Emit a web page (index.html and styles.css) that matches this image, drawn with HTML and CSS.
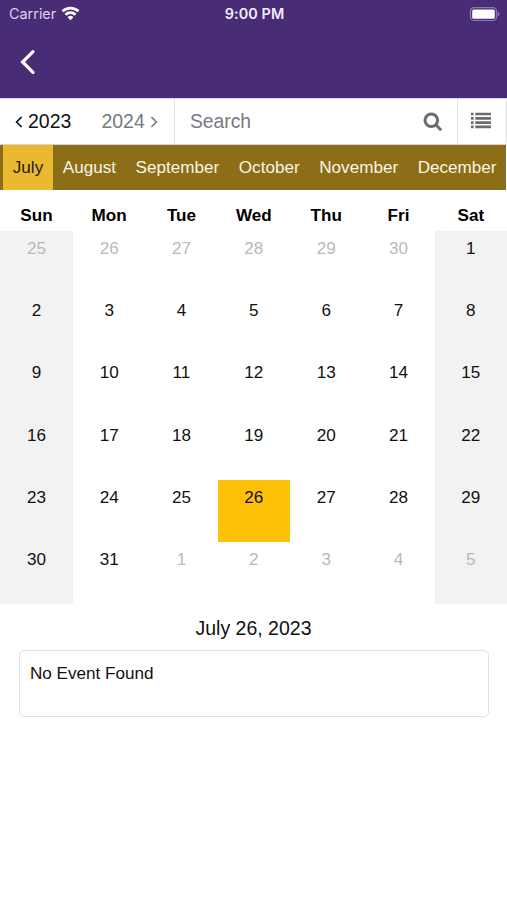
FILE: index.html
```html
<!DOCTYPE html>
<html lang="en">
<head>
    <meta charset="UTF-8">
    <meta name="viewport" content="width=device-width, initial-scale=1.0">
    <title>Calendar</title>
    <link rel="stylesheet" href="styles.css">
</head>
<body>

    <header class="header">
        <div class="status">
            <div class="carrier">
                Carrier
                <svg class="wifi" width="19" height="15" viewBox="0 0 19 15">
                    <path d="M1.5 5.3a11.6 11.6 0 0 1 16 0" />
                    <path d="M4.5 8.7a7.2 7.2 0 0 1 10 0" />
                    <path class="dot" d="M9.5 14.2 6.6 11.2a4.2 4.2 0 0 1 5.8 0z" />
                </svg>
            </div>
            <div class="time">9:00 PM</div>
            <svg class="battery" width="32" height="14" viewBox="0 0 32 14">
                <rect class="case" x="1.5" y=".7" width="26" height="12.8" rx="3.6" />
                <rect class="charge" x="3.2" y="2.4" width="22.6" height="9.4" rx="1.5" />
                <path class="tip" d="M28.6 4.8c2.4.8 2.4 3.8 0 4.6z" />
            </svg>
        </div>
        <svg class="back" width="18" height="26" viewBox="0 0 18 26">
            <path d="M14 2.6 3.6 13 14 23.4" />
        </svg>
    </header>

    <div class="toolbar">
        <div class="years">
            <div class="year current">
                <svg width="8" height="12" viewBox="0 0 8 12"><path d="M6.6 1l-5 5 5 5" /></svg>
                <span>2023</span>
            </div>
            <div class="year">
                <span>2024</span>
                <svg width="8" height="12" viewBox="0 0 8 12"><path d="M1.4 1l5 5-5 5" /></svg>
            </div>
        </div>
        <div class="search">
            <span>Search</span>
            <svg width="20" height="20" viewBox="0 0 20 20">
                <circle cx="8.3" cy="8.3" r="6.3" />
                <path d="m13 13 5.2 5.2" />
            </svg>
        </div>
        <div class="list">
            <svg width="20" height="17" viewBox="0 0 20 17">
                <path d="M0 2h2.6M4.3 2H20M0 6.3h2.6M4.3 6.3H20M0 10.6h2.6M4.3 10.6H20M0 14.9h2.6M4.3 14.9H20" />
            </svg>
        </div>
    </div>

    <nav class="months">
        <div class="month active">July</div>
        <div class="month">August</div>
        <div class="month">September</div>
        <div class="month">October</div>
        <div class="month">November</div>
        <div class="month">December</div>
    </nav>

    <div class="weekdays">
        <div>Sun</div>
        <div>Mon</div>
        <div>Tue</div>
        <div>Wed</div>
        <div>Thu</div>
        <div>Fri</div>
        <div>Sat</div>
    </div>

    <div class="days">
        <div class="weekend other">25</div>
        <div class="other">26</div>
        <div class="other">27</div>
        <div class="other">28</div>
        <div class="other">29</div>
        <div class="other">30</div>
        <div class="weekend">1</div>

        <div class="weekend">2</div>
        <div>3</div>
        <div>4</div>
        <div>5</div>
        <div>6</div>
        <div>7</div>
        <div class="weekend">8</div>

        <div class="weekend">9</div>
        <div>10</div>
        <div>11</div>
        <div>12</div>
        <div>13</div>
        <div>14</div>
        <div class="weekend">15</div>

        <div class="weekend">16</div>
        <div>17</div>
        <div>18</div>
        <div>19</div>
        <div>20</div>
        <div>21</div>
        <div class="weekend">22</div>

        <div class="weekend">23</div>
        <div>24</div>
        <div>25</div>
        <div class="selected">26</div>
        <div>27</div>
        <div>28</div>
        <div class="weekend">29</div>

        <div class="weekend">30</div>
        <div>31</div>
        <div class="other">1</div>
        <div class="other">2</div>
        <div class="other">3</div>
        <div class="other">4</div>
        <div class="weekend other">5</div>
    </div>

    <div class="date">July 26, 2023</div>
    <div class="events">No Event Found</div>

</body>
</html>
```
FILE: styles.css
```css
* {
    box-sizing: border-box;
}

body {
    margin: 0;
    background-color: white;
    color: #111;
    font-family: "Liberation Sans", Arial, sans-serif;
    font-size: 17.1px;
}

svg {
    display: block;
    fill: none;
    stroke: currentColor;
}

.header {
    height: 98px;
    background-color: #492c76;
    color: white;
}

.status {
    display: grid;
    grid-template-columns: 1fr auto 1fr;
    align-items: center;
    height: 27px;
    padding: 0 7px 0 9px;
    font-family: Inter, sans-serif;
    font-size: 14.4px;
}

.carrier {
    display: flex;
    align-items: center;
    gap: 5px;
    color: #dcd0ee;
}

.wifi {
    color: white;
    stroke-width: 2.7;
}

.wifi .dot {
    fill: white;
    stroke: none;
}

.time {
    font-size: 14.4px;
    font-weight: 600;
    letter-spacing: 0.1px;
    color: #f3edfb;
}

.battery {
    justify-self: end;
    margin-right: -1px;
    stroke: none;
}

.battery .case {
    stroke: #8d7aad;
    stroke-width: 1.2;
}

.battery .charge {
    fill: white;
}

.battery .tip {
    fill: #8d7aad;
}

.back {
    margin: 22px 0 0 19px;
    stroke-width: 3.2;
    stroke-linecap: round;
}

.toolbar {
    display: flex;
    height: 47px;
    border-top: 1px solid #dcd6e4;
    border-bottom: 1px solid #d9d5ca;
    font-size: 19.5px;
    color: #777a7e;
}

.years {
    display: flex;
    align-items: center;
    gap: 30px;
    width: 174px;
    padding-left: 15px;
}

.year {
    display: flex;
    align-items: center;
    gap: 5px;
}

.year svg {
    stroke-width: 1.7;
}

.year.current {
    color: #111;
}

.search {
    flex: 1;
    display: flex;
    align-items: center;
    justify-content: space-between;
    padding: 0 14px 0 15px;
    border-left: 1px solid #dedfe3;
    font-size: 19.3px;
}

.search svg {
    color: #6c6c70;
    stroke-width: 3;
}

.list {
    display: flex;
    justify-content: center;
    width: 50px;
    padding: 13px 2px 0 0;
    border: solid #dedfe3;
    border-width: 0 1px;
    border-radius: 0 4px 4px 0;
    color: #6c6c70;
}

.list svg {
    stroke-width: 2.7;
}

.months {
    display: flex;
    height: 45px;
    margin-right: 1px;
    padding-left: 3px;
    background-color: #8c6e19;
    color: #fbf5e3;
}

.month {
    padding: 0 9.8px;
    line-height: 45px;
}

.month.active {
    background-color: #e9b931;
    color: #1e1a0c;
}

.weekdays,
.days {
    display: grid;
    grid-template-columns: 73px repeat(6, 1fr);
    text-align: center;
}

.weekdays {
    height: 41px;
    padding-top: 7px;
    line-height: 38px;
    font-weight: bold;
    color: black;
}

.days {
    grid-auto-rows: 62.2px;
}

.days div {
    padding-top: 8px;
    line-height: 20px;
}

.days .weekend {
    background-color: #f2f2f2;
}

.days .other {
    color: #b9b9b9;
}

.days .selected {
    background-color: #ffc107;
}

.date {
    margin-top: 12px;
    line-height: 24px;
    text-align: center;
    font-size: 19.5px;
}

.events {
    height: 67px;
    margin: 10px 18px 0 19px;
    padding: 13px 10px;
    border: 1px solid #e1e1e1;
    border-radius: 5px;
    line-height: 20px;
}
```
